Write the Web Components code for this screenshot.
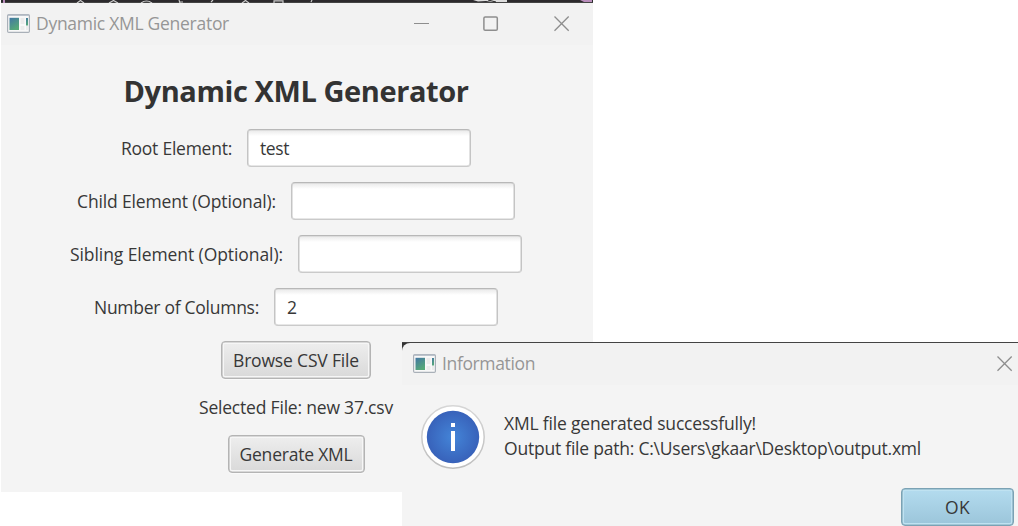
<!DOCTYPE html>
<html lang="en"><head><meta charset="utf-8"><title>Dynamic XML Generator</title>
<style>
html,body{margin:0;width:1018px;height:526px;overflow:hidden;background:#fff}
body{font:400 17.5px/25px "Open Sans","Noto Sans",sans-serif;color:#383838}
desktop-view{--surface:#f4f4f4}
</style></head><body>
<desktop-view></desktop-view>
<script>
const define=(name,html,init)=>customElements.define(name,class extends HTMLElement{
  constructor(){super();this.attachShadow({mode:'open'}).innerHTML=html;}
  connectedCallback(){if(init)init(this,this.shadowRoot);}
});
// Text run whose tracking is adjusted to a given advance width.
define('fit-text',`<style>:host{display:block;white-space:pre}span{display:inline-block}</style><span><slot></slot></span>`,(el,r)=>{
  const w=+el.getAttribute('width'),s=r.querySelector('span');
  el.style.width=w+'px';
  const n=el.textContent.length;
  s.style.letterSpacing=((w-s.getBoundingClientRect().width)/n)+'px';
});
define('app-icon',`<style>:host{display:block;width:23px;height:19px}svg{display:block}</style>
<svg width="23" height="19" viewBox="0 0 23 19"><defs><linearGradient id="g" x1="0" y1="0" x2=".5" y2="1"><stop offset="0" stop-color="#4276a4"/><stop offset="1" stop-color="#55a878"/></linearGradient></defs>
<rect x=".6" y=".6" width="21.8" height="17.8" rx="1.2" fill="#f8f8f8" stroke="#a9b0b8" stroke-width="1.2"/><path d="M1 1.2h21" stroke="#b7bfc9" stroke-width="1.4"/>
<rect x="2.5" y="3.8" width="9.5" height="12.2" fill="url(#g)"/><path d="M13.5 4h4v6h-4zM13.5 12h4v4h-4zM19 12h2v4h-2z" fill="#ebebeb"/><rect x="19" y="4" width="2" height="7.5" fill="url(#g)"/></svg>`);
define('window-glyph',`<style>:host{display:block;width:16px;height:16px}svg{display:block}</style><svg width="16" height="16" fill="none" stroke="#8e8e8e" stroke-width="1.3"></svg>`,(el,r)=>{
  r.querySelector('svg').innerHTML={min:'<path d="M1 7.5h15" stroke-width="1"/>',max:'<rect x=".9" y=".9" width="13.4" height="13.4" rx="1.3" stroke-width="1.5"/>',close:'<path d="M.5.5l14.2 14.2M14.7.5L.5 14.7"/>'}[el.getAttribute('kind')];
});
define('title-bar',`<style>:host{display:flex;align-items:center;height:42px;box-sizing:border-box;color:#969696;background:#f2f2f2}
app-icon{margin-right:6px;position:relative;top:-1px}.t{padding-bottom:2px}.sp{flex:1}</style><app-icon></app-icon><div class="t"><slot></slot></div><span class="sp"></span><slot name="controls"></slot>`);
define('text-field',`<style>:host{display:flex;align-items:center;box-sizing:border-box;width:224px;height:38px;padding:0 12px;border:1px solid;border-color:#b8b8b8 #c4c4c4 #cacaca;border-radius:4px;background:linear-gradient(#e9e9e9,#fff 6px);box-shadow:inset 0 0 0 .6px #cfcfcf}</style><slot></slot>`);
define('form-row',`<style>:host{display:flex;justify-content:center;align-items:center;gap:15px;height:38px}.l{padding-top:1px}</style><div class="l"><slot name="label"></slot></div><text-field><slot></slot></text-field>`);
define('push-button',`<style>:host{display:flex;align-items:center;justify-content:center;box-sizing:border-box;height:38px;padding-top:1px;border:1px solid #b4b4b4;border-radius:4px;background:linear-gradient(#eee,#d9d9d9);box-shadow:inset 0 0 0 .6px #b9b9b9,inset 0 0 0 2px #f6f6f6,0 1px 0 #fafafa}
:host([primary]){border-color:#7ba2b4;background:linear-gradient(#b4dcef,#9bc5da);box-shadow:inset 0 0 0 .6px #82a9bb,inset 0 0 0 2px #bfe2f1}</style><slot></slot>`);
define('backdrop-strip',`<style>:host{display:block;height:3px}svg{display:block}</style><svg width="592" height="3"><path fill="#2c2a2d" d="M0 0h592v3H0z"/><path fill="#444" d="M0 2h592v1H0z"/>
<path d="M76 3l3.500-2.500L83 3M108 3l4.500-2.500L117 3M140 3q5.500-4 11 0M178 0l1 3M178 2h4M212 0l-2 2M241 3l3.500-2.500L248 3M273 3V.8h9V3M310 2l1-2" fill="none" stroke="#ccc" stroke-width="1.2"/><path d="M472 0h34v2h-15l-6-1-8 .5z" fill="#ddd"/><path d="M487 0l8 2" stroke="#222"/><path d="M2 0h2v3H2zM579 0h12v2h-8z" fill="#b98dbb"/></svg>`);
define('info-badge',`<style>:host{display:block;width:64px;height:64px}svg{display:block}</style><svg width="64" height="64" viewBox="0 0 64 64"><defs><radialGradient id="b"><stop offset="0" stop-color="#4485d8"/><stop offset="1" stop-color="#3862ba"/></radialGradient><linearGradient id="o" x2="0" y2="1"><stop stop-color="#d6d6d6"/><stop offset="1" stop-color="#bebebe"/></linearGradient></defs><circle cx="32" cy="32" r="31.2" fill="#fff" stroke="url(#o)" stroke-width="1.5"/><circle cx="32" cy="32" r="26.2" fill="url(#b)"/><path d="M30 18h4v4h-4zM30 26h4v20h-4z" fill="#fff"/></svg>`);
define('main-window',`<style>:host{display:flex;flex-direction:column;width:592px;height:492px;background:var(--surface)}
title-bar{padding:0 23px 0 6px}
.c{display:flex;gap:54px}.c window-glyph:nth-child(2){margin-right:1px}
main{display:flex;flex-direction:column;align-items:center;gap:15px;padding:24px 2px 0 0}
h1{margin:0 0 2px;font-size:29px;line-height:43px;font-weight:700;height:43px;color:#333}</style>
<backdrop-strip></backdrop-strip>
<title-bar><fit-text width="193">Dynamic XML Generator</fit-text><div class="c" slot="controls"><window-glyph kind="min"></window-glyph><window-glyph kind="max"></window-glyph><window-glyph kind="close"></window-glyph></div></title-bar>
<main><h1><fit-text width="345">Dynamic XML Generator</fit-text></h1>
<form-row><fit-text slot="label" width="111">Root Element:</fit-text><fit-text width="29">test</fit-text></form-row>
<form-row><fit-text slot="label" width="199">Child Element (Optional):</fit-text></form-row>
<form-row><fit-text slot="label" width="213">Sibling Element (Optional):</fit-text></form-row>
<form-row><fit-text slot="label" width="165">Number of Columns:</fit-text><fit-text width="10">2</fit-text></form-row>
<push-button style="width:150px"><fit-text width="126">Browse CSV File</fit-text></push-button>
<fit-text width="194" style="height:26px;line-height:27px">Selected File: new 37.csv</fit-text>
<push-button style="width:137px"><fit-text width="113">Generate XML</fit-text></push-button></main>`);
define('info-dialog',`<style>:host{display:block;width:616px;height:184px;overflow:hidden}
.in{display:flex;flex-direction:column;border-top:1px solid #444;height:183px;background:linear-gradient(#333 0 20px,#f4f4f4 20px)}
title-bar{border-radius:8px 0 0;padding:0 6px 0 11px}
section{flex:1;background:var(--surface);display:grid;grid-template-columns:64px 1fr;column-gap:19px;padding:20px 4px 0 19px;align-content:start}
.m{padding-top:6px}push-button{grid-column:2;justify-self:end;width:113px;margin-top:19px}</style>
<div class="in"><title-bar><fit-text width="93">Information</fit-text><window-glyph slot="controls" kind="close" style="margin-right:-1px"></window-glyph></title-bar>
<section><info-badge></info-badge><div class="m"><fit-text width="252">XML file generated successfully!</fit-text><fit-text width="417">Output file path: C:\\Users\\gkaar\\Desktop\\output.xml</fit-text></div><push-button primary><fit-text width="25">OK</fit-text></push-button></section></div>`);
define('desktop-view',`<style>:host{display:block;position:relative;width:1018px;height:526px;overflow:hidden}
main-window{position:absolute;left:1px;top:0}info-dialog{position:absolute;left:402px;top:342px}</style><main-window></main-window><info-dialog></info-dialog>`);
</script></body></html>
